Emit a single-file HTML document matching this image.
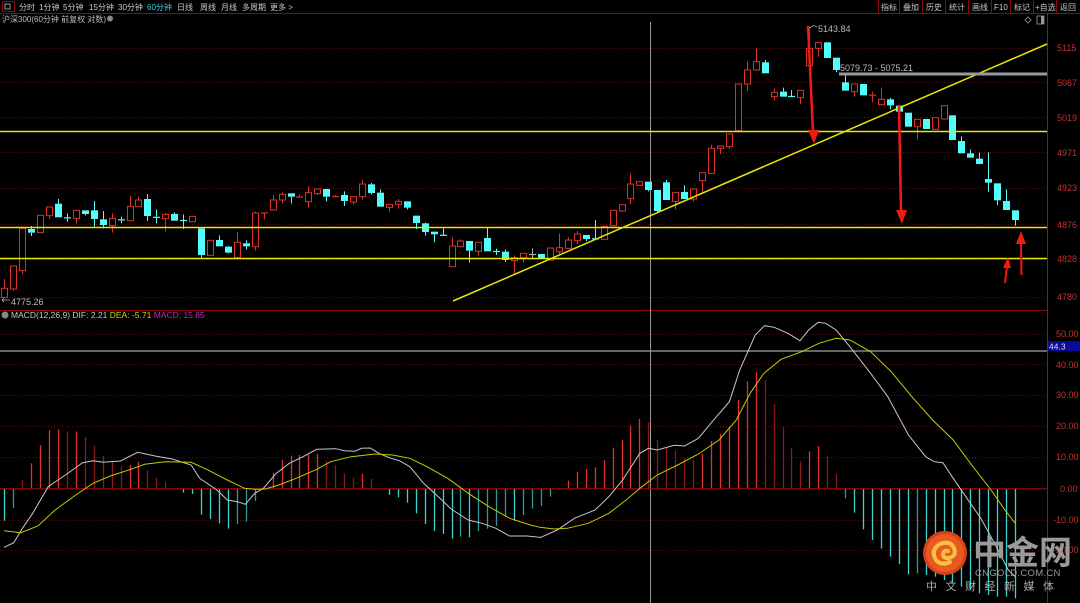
<!DOCTYPE html>
<html><head><meta charset="utf-8"><style>
html,body{margin:0;padding:0;background:#000;width:1080px;height:603px;overflow:hidden;font-family:"Liberation Sans","Noto Sans CJK SC",sans-serif}
svg{position:absolute;left:0;top:0}
</style></head><body>
<svg id="s" width="1080" height="603" viewBox="0 0 1080 603" xmlns="http://www.w3.org/2000/svg" font-family="Liberation Sans, Noto Sans CJK SC, sans-serif">
<rect width="1080" height="603" fill="#000"/>
<line x1="0" y1="13.5" x2="1080" y2="13.5" stroke="#8b0a0a"/>
<rect x="2.5" y="1.5" width="12" height="10" fill="none" stroke="#8b0a0a"/>
<rect x="5" y="4" width="5" height="5" fill="none" stroke="#bbb" stroke-width="0.8"/>
<g font-size="8" fill="#c8c8c8">
<text x="19" y="10">分时</text><text x="39" y="10">1分钟</text><text x="63" y="10">5分钟</text><text x="89" y="10">15分钟</text><text x="118" y="10">30分钟</text><text x="147" y="10" fill="#3cd0e0">60分钟</text><text x="177" y="10">日线</text><text x="200" y="10">周线</text><text x="221" y="10">月线</text><text x="242" y="10">多周期</text><text x="270" y="10">更多 &gt;</text>
</g>
<g stroke="#8b0a0a" fill="none">
<line x1="878.5" y1="0" x2="878.5" y2="13"/><line x1="899.5" y1="0" x2="899.5" y2="13"/><line x1="922.5" y1="0" x2="922.5" y2="13"/><line x1="945.5" y1="0" x2="945.5" y2="13"/><line x1="968.5" y1="0" x2="968.5" y2="13"/><line x1="991.5" y1="0" x2="991.5" y2="13"/><line x1="1010.5" y1="0" x2="1010.5" y2="13"/><line x1="1033.5" y1="0" x2="1033.5" y2="13"/><line x1="1056.5" y1="0" x2="1056.5" y2="13"/>
</g>
<g font-size="8" fill="#c8c8c8">
<text x="881" y="10">指标</text><text x="903" y="10">叠加</text><text x="926" y="10">历史</text><text x="949" y="10">统计</text><text x="972" y="10">画线</text><text x="994" y="10">F10</text><text x="1014" y="10">标记</text><text x="1035" y="10">+自选</text><text x="1060" y="10">返回</text>
</g>
<text x="2" y="22" font-size="8" fill="#bbb">沪深300(60分钟 前复权 对数)</text>
<circle cx="110" cy="18.5" r="3" fill="#888"/>
<path d="M1025 20 l3 -3 l3 3 l-3 3z" fill="none" stroke="#999" stroke-width="0.8"/>
<rect x="1037" y="16" width="7" height="8" fill="none" stroke="#999" stroke-width="0.8"/>
<rect x="1041" y="16" width="3" height="8" fill="#999"/>
<line x1="1047.5" y1="13" x2="1047.5" y2="603" stroke="#a01010"/>
<line x1="0" y1="310.5" x2="1047" y2="310.5" stroke="#8b0a0a"/>
<g id="grid" stroke="#6a0a0a" stroke-dasharray="1,2"></g>
<g font-size="9" fill="#c83030">
<text x="1057" y="51">5115</text><text x="1057" y="86">5067</text><text x="1057" y="121">5019</text><text x="1057" y="156">4971</text><text x="1057" y="191">4923</text><text x="1057" y="228">4876</text><text x="1057" y="262">4828</text><text x="1057" y="300">4780</text>
<text x="1056" y="337">50.00</text><text x="1056" y="368">40.00</text><text x="1056" y="398">30.00</text><text x="1056" y="429">20.00</text><text x="1056" y="460">10.00</text><text x="1060" y="492">0.00</text><text x="1053" y="523">-10.00</text><text x="1053" y="553">-20.00</text>
</g>
<rect x="1048" y="341" width="32" height="10" fill="#0a0a9a"/>
<text x="1049" y="349.5" font-size="8.5" fill="#ddd">44.3</text>
<line x1="0" y1="351" x2="1047" y2="351" stroke="#888" stroke-width="1.5"/>
<line x1="650.5" y1="22" x2="650.5" y2="603" stroke="#999" stroke-width="1"/>
<g id="candles"></g>
<g id="macd"></g>
<line x1="0" y1="131.5" x2="1047" y2="131.5" stroke="#e8e800" stroke-width="1.5"/>
<line x1="0" y1="227.5" x2="1047" y2="227.5" stroke="#e8e800" stroke-width="1.5"/>
<line x1="0" y1="258.5" x2="1047" y2="258.5" stroke="#e8e800" stroke-width="1.5"/>
<line x1="453" y1="301" x2="1047" y2="44" stroke="#e8e800" stroke-width="1.5"/>
<line x1="839" y1="74" x2="1047" y2="74" stroke="#999" stroke-width="3"/>
<text x="840" y="71" font-size="9" fill="#bbb">5079.73 - 5075.21</text>
<text x="818" y="32" font-size="9" fill="#bbb">5143.84</text>
<path d="M810 28 q3 -4 7 -1" stroke="#bbb" fill="none" stroke-width="0.8"/>
<text x="11" y="305" font-size="9" fill="#bbb">4775.26</text>
<path d="M2 300 h8 M4 298 l-2 2 l2 2" stroke="#bbb" fill="none" stroke-width="0.8"/>
<g fill="#f01a10" stroke="#f01a10">
<line x1="808" y1="26" x2="813" y2="132" stroke-width="2.5"/><path d="M808 130 L819 130 L814 144z" stroke="none"/>
<line x1="899" y1="105" x2="901" y2="212" stroke-width="2.5"/><path d="M896 210 L907 210 L902 224z" stroke="none"/>
<line x1="1005" y1="283" x2="1007" y2="266" stroke-width="2"/><path d="M1003 268 L1011 268 L1008 257z" stroke="none"/>
<line x1="1021.5" y1="275" x2="1021" y2="242" stroke-width="2"/><path d="M1016 244 L1026 244 L1021 231z" stroke="none"/>
</g>
<circle cx="5" cy="315" r="3.5" fill="#888"/>
<text x="11" y="318" font-size="8.5" fill="#c8c8c8">MACD(12,26,9) DIF: 2.21 <tspan fill="#d8d800">DEA: -5.71</tspan> <tspan fill="#d020d0">MACD: 15.85</tspan></text>
<circle cx="945" cy="553" r="22" fill="#d8401a"/>
<circle cx="945" cy="553" r="19" fill="#e85a20"/>
<path d="M936 560 q-6 -10 4 -16 q10 -4 14 4 q3 8 -5 10 q-6 1 -6 -4 q1 -4 5 -3 M936 560 q5 6 14 2" fill="none" stroke="#f8c040" stroke-width="4" stroke-linecap="round"/>
<text x="973" y="564" font-size="33" font-weight="bold" fill="#9a9a9a" font-family="Noto Sans CJK SC, sans-serif">中金网</text>
<text x="975" y="576" font-size="9.5" fill="#9a9a9a" letter-spacing="0.3">CNGOLD.COM.CN</text>
<text x="926" y="590" font-size="11" fill="#aaa" letter-spacing="8.5" font-family="Noto Sans CJK SC, sans-serif">中文财经新媒体</text>
</svg>
<script>
var NS="http://www.w3.org/2000/svg";
function el(p,t,a){var e=document.createElementNS(NS,t);for(var k in a)e.setAttribute(k,a[k]);p.appendChild(e);return e;}
var g=document.getElementById('grid');
[48,82,117,152,188,224,259,297,334,364,395,426,457,489,520,550].forEach(function(y){el(g,'line',{x1:0,y1:y+.5,x2:1047,y2:y+.5});});
var Z5=[[385,412,357,412,'r'],[318,387,318,392,'r'],[205,332,200,342,'r'],[207,218,198,228,'c'],[166,218,166,218,'r'],[141,167,141,177,'r'],[131,172,117,172,'c'],[172,175,160,186,'c'],[151,175,151,191,'r'],[151,162,151,166,'c'],[151,177,123,200,'c'],[178,195,153,205,'c'],[175,197,160,218,'r'],[178,181,170,190,'c'],[139,182,108,184,'r'],[120,140,110,140,'r'],[117,168,102,183,'c'],[170,174,148,190,'c'],[163,176,160,215,'r'],[162,182,157,182,'c'],[180,183,163,207,'c'],[169,185,169,185,'r'],[205,285,205,293,'c'],[241,286,241,286,'r'],[240,259,226,260,'c'],[260,278,258,280,'c'],[247,293,216,293,'r'],[250,259,241,268,'c'],[159,260,155,272,'r'],[158,160,158,178,'r'],[120,150,105,150,'r'],[103,120,97,130,'r'],[100,110,100,130,'c'],[110,112,103,112,'r'],[98,125,78,143,'r'],[87,101,87,105,'r'],[87,110,87,124,'c'],[108,112,105,113,'r'],[105,123,94,138,'c'],[110,126,108,134,'r'],[72,110,60,119,'r'],[73,99,69,103,'c'],[98,140,88,140,'c'],[133,142,133,155,'r'],[124,133,117,146,'r'],[124,143,124,148,'c'],[167,189,167,207,'c'],[190,216,188,227,'c'],[215,223,215,247,'c'],[225,227,205,227,'c']];
var Z6=[[348,410,322,410,'r'],[333,350,328,352,'r'],[333,362,333,397,'c'],[337,364,337,377,'r'],[324,364,293,364,'c'],[363,366,356,375,'c'],[365,390,358,396,'c'],[383,392,376,432,'r'],[370,383,370,397,'r'],[372,375,355,385,'w'],[372,385,372,385,'c'],[354,390,354,390,'r'],[353,365,311,375,'r'],[330,355,322,355,'r'],[312,332,303,342,'r'],[315,327,315,333,'c'],[325,328,270,328,'c'],[289,328,289,328,'r'],[241,287,241,287,'r'],[224,243,224,243,'r'],[162,206,130,222,'r'],[155,166,155,166,'r'],[155,180,155,184,'c'],[180,243,180,248,'c'],[157,210,150,210,'c'],[188,214,188,238,'r'],[186,207,166,207,'c'],[177,207,177,215,'r'],[128,152,128,190,'r'],[55,130,45,130,'r'],[48,55,48,72,'r'],[12,50,12,57,'r']];
var Z7=[[192,332,192,332,'r'],[150,192,125,213,'r'],[125,150,85,150,'r'],[127,160,120,160,'c'],[217,230,205,242,'r'],[215,230,203,230,'c'],[228,231,210,231,'c'],[211,233,211,252,'r'],[85,137,20,137,'r'],[68,85,68,110,'r'],[67,114,67,114,'c'],[113,150,113,156,'c'],[187,212,165,212,'c'],[192,215,192,230,'r'],[192,226,192,226,'c'],[224,227,215,247,'r'],[238,254,203,254,'r'],[238,256,234,268,'c'],[257,275,257,292,'c'],[278,320,278,320,'c'],[298,320,298,358,'r'],[297,327,297,327,'c'],[293,328,293,328,'r'],[257,297,257,297,'r'],[286,360,286,360,'c'],[363,400,349,400,'c'],[400,413,388,413,'c'],[416,432,398,432,'c'],[477,488,397,515,'c'],[490,541,490,555,'c'],[543,570,508,570,'c'],[571,600,571,617,'c']];
var C=document.getElementById('candles');
function X(i){return 4.3+8.945*i;}
function draw(arr,off,y0){arr.forEach(function(d,j){var i=off+j,x=Math.round(X(i))+.5;var t=y0+d[0]/3,b=y0+d[1]/3,h=y0+d[2]/3,l=y0+d[3]/3;
var col=d[4]=='r'?'#e0302a':(d[4]=='c'?'#54fcfc':'#aaa');
if(h<t-.5)el(C,'line',{x1:x,y1:h,x2:x,y2:t,stroke:col});
if(l>b+.5)el(C,'line',{x1:x,y1:b,x2:x,y2:l,stroke:col});
if(b-t<2){el(C,'line',{x1:x-3.5,y1:(t+b)/2,x2:x+3.5,y2:(t+b)/2,stroke:col,'stroke-width':1.2});}
else if(d[4]=='r'){el(C,'rect',{x:x-3,y:t,width:6,height:b-t,fill:'#000',stroke:col});}
else el(C,'rect',{x:x-3.5,y:t,width:7,height:b-t,fill:col});});}
draw(Z5,0,160);draw(Z6,50,130);draw(Z7,82,20);
var H=[632,594,510,460,405,360,358,364,364,381,406,438,455,469,465,455,481,504,516,536,548,552,614,627,640,656,642,635,573,536,488,450,437,435,434,432,452,466,491,503,492,507,536,555,562,578,610,642,663,672,686,680,682,663,656,648,620,632,615,596,
588,560,538,512,485,476,472,450,413,390,347,327,337,390,413,422,444,450,432,393,372,350,270,214,186,210,282,352,414,455,424,408,439,491,565,608,658,690,716,740,762,793,790,795,800,810,820,830,840,850,855,860,860,865];
var M=document.getElementById('macd');
var zy=310+536/3;
H.forEach(function(v,i){if(Math.abs(v-536)<2)return;var x=Math.round(X(i))+.5;var y=310+v/3;var prev=i>0?Math.abs(H[i-1]-536):0;var grow=Math.abs(v-536)>=prev;
var col=v<536?(grow?'#e03030':'#8a1a1a'):(grow?'#40d0d0':'#2a9a9a');el(M,'line',{x1:x,y1:zy,x2:x,y2:y,stroke:col,'stroke-width':1.3});});
el(M,'line',{x1:0,y1:zy,x2:1047,y2:zy,stroke:'#8b0a0a'});
function pl(a,b,col){var p=[];a.forEach(function(q){p.push((q[0]/2.904).toFixed(1)+','+(310+q[1]/3).toFixed(1));});b.forEach(function(q){p.push((540+q[0]/2.904).toFixed(1)+','+(310+q[1]/3).toFixed(1));});el(M,'polyline',{points:p.join(' '),fill:'none',stroke:col,'stroke-width':1});}
pl([[12,712],[40,698],[65,655],[95,610],[140,530],[190,495],[240,458],[270,452],[300,457],[350,453],[400,427],[450,438],[500,447],[555,465],[580,505],[630,540],[660,570],[690,575],[712,583],[740,550],[765,535],[800,492],[840,460],[880,440],[920,418],[975,416],[1000,422],[1030,424],[1050,415],[1075,414],[1100,430],[1130,443],[1160,452],[1190,470],[1230,520],[1280,567],[1310,597],[1360,630],[1400,640],[1440,655],[1480,678],[1530,678],[1568,682]],
[[0,683],[50,660],[100,625],[160,600],[200,560],[240,510],[290,430],[315,415],[340,420],[390,406],[420,408],[460,385],[500,335],[550,275],[580,180],[625,75],[652,47],[680,52],[720,70],[755,92],[780,60],[808,37],[830,40],[860,60],[900,110],[960,190],[1010,260],[1070,375],[1120,440],[1145,455],[1170,458],[1200,505],[1250,580],[1280,625],[1320,700],[1360,780],[1380,800]],'#c8c8c8');
pl([[12,662],[60,668],[110,648],[160,600],[220,555],[270,520],[320,498],[380,478],[420,463],[480,455],[555,457],[600,478],[660,510],[710,535],[740,538],[770,537],[810,525],[860,505],[920,478],[960,455],[1020,440],[1090,432],[1140,435],[1190,445],[1240,470],[1300,505],[1360,550],[1420,590],[1480,625],[1540,645],[1568,652]],
[[0,652],[40,657],[80,655],[140,640],[200,610],[250,570],[290,535],[340,495],[400,465],[460,432],[520,390],[570,330],[610,250],[650,190],[700,148],[760,125],[810,100],[860,85],[900,90],[960,125],[1020,185],[1080,260],[1140,330],[1200,390],[1250,460],[1310,540],[1350,600],[1380,640]],'#c8c800');
</script>
</body></html>
